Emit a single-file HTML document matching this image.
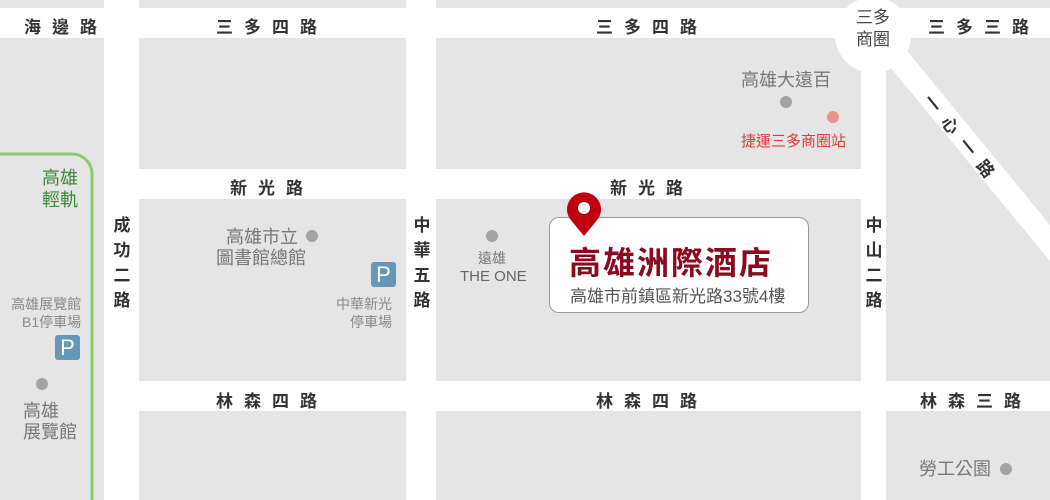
<!DOCTYPE html>
<html><head><meta charset="utf-8"><style>
*{margin:0;padding:0}
body{width:1050px;height:500px;background:#fff;position:relative;overflow:hidden;font-family:"Liberation Sans","Noto Sans CJK TC",sans-serif}
.b{position:absolute;background:#e5e5e5}
.t{position:absolute;white-space:nowrap}
.r{font-weight:bold;color:#333;font-size:17px;letter-spacing:11px}
.v{font-weight:bold;color:#333;font-size:17px;line-height:25px;width:20px;text-align:center}
.g{color:#777;font-size:18px;line-height:21px}
.d{position:absolute;width:12px;height:12px;border-radius:50%;background:#a3a3a3}
.p{position:absolute;width:25px;height:25px;background:#6598b8;border-radius:3px;color:#fff;font-size:22px;line-height:25px;text-align:center}
</style></head><body>
<div class="b" style="left:0;top:0;width:104px;height:8px"></div>
<div class="b" style="left:139px;top:0;width:267px;height:8px"></div>
<div class="b" style="left:436px;top:0;width:425px;height:8px"></div>
<div class="b" style="left:886px;top:0;width:164px;height:8px"></div>
<div class="b" style="left:0;top:38px;width:104px;height:462px"></div>
<div class="b" style="left:139px;top:38px;width:267px;height:131px"></div>
<div class="b" style="left:436px;top:38px;width:425px;height:131px"></div>
<div class="b" style="left:886px;top:38px;width:164px;height:343px"></div>
<div class="b" style="left:139px;top:199px;width:267px;height:182px"></div>
<div class="b" style="left:436px;top:199px;width:425px;height:182px"></div>
<div class="b" style="left:139px;top:411px;width:267px;height:89px"></div>
<div class="b" style="left:436px;top:411px;width:425px;height:89px"></div>
<div class="b" style="left:886px;top:411px;width:164px;height:89px"></div>
<svg width="1050" height="500" style="position:absolute;left:0;top:0">
<polygon points="868,40 898,40 1050,225 1050,261" fill="#fff"/>
<circle cx="873" cy="35" r="38" fill="#fff"/>
<path d="M0,154 H72 A20,20 0 0 1 92,174 V500" fill="none" stroke="#8bcc6a" stroke-width="3"/>
</svg>
<div class="t r" style="left:24px;top:13px">海邊路</div>
<div class="t r" style="left:216px;top:13px">三多四路</div>
<div class="t r" style="left:596px;top:13px">三多四路</div>
<div class="t r" style="left:928px;top:13px">三多三路</div>
<div class="t r" style="left:230px;top:174px">新光路</div>
<div class="t r" style="left:610px;top:174px">新光路</div>
<div class="t r" style="left:216px;top:387px">林森四路</div>
<div class="t r" style="left:596px;top:387px">林森四路</div>
<div class="t r" style="left:920px;top:387px">林森三路</div>
<div class="t v" style="left:112px;top:213px">成<br>功<br>二<br>路</div>
<div class="t v" style="left:412px;top:213px">中<br>華<br>五<br>路</div>
<div class="t v" style="left:864px;top:213px">中<br>山<br>二<br>路</div>
<div class="t" style="left:856px;top:7px;color:#444;font-size:17px;line-height:22px;text-align:center">三多<br>商圈</div>
<div class="t" style="left:938px;top:88px;color:#333;font-size:17px;font-weight:bold;transform:rotate(51deg);transform-origin:0 0;letter-spacing:11px">一心一路</div>
<div class="t" style="left:42px;top:167px;color:#3a8a3a;font-size:18px;line-height:22px">高雄<br>輕軌</div>
<div class="t g" style="left:741px;top:70px">高雄大遠百</div>
<div class="d" style="left:780px;top:96px"></div>
<div class="d" style="left:827px;top:111px;background:#f08e90"></div>
<div class="t" style="left:741px;top:130px;color:#e2383d;font-size:15px">捷運三多商圈站</div>
<div class="t g" style="left:226px;top:227px">高雄市立</div>
<div class="t g" style="left:216px;top:248px">圖書館總館</div>
<div class="d" style="left:306px;top:230px"></div>
<div class="p" style="left:371px;top:262px">P</div>
<div class="t" style="left:336px;top:295px;color:#888;font-size:14px;line-height:18px;text-align:right">中華新光<br><span style="padding-left:14px">停車場</span></div>
<div class="t" style="left:10px;top:295px;color:#888;font-size:14px;line-height:18px;text-align:right">高雄展覽館<br><span style="padding-left:12px">B1停車場</span></div>
<div class="p" style="left:55px;top:335px">P</div>
<div class="d" style="left:36px;top:378px"></div>
<div class="t g" style="left:23px;top:401px;line-height:21px">高雄<br>展覽館</div>
<div class="d" style="left:486px;top:230px"></div>
<div class="t" style="left:478px;top:248px;color:#777;font-size:14px">遠雄</div>
<div class="t" style="left:460px;top:268px;color:#666;font-size:15px">THE ONE</div>
<div style="position:absolute;left:549px;top:217px;width:258px;height:94px;border:1px solid #999;border-radius:10px;background:#fff"></div>
<div class="t" style="left:569px;top:238px;color:#8a0a20;font-size:32px;font-weight:bold;letter-spacing:2px">高雄洲際酒店</div>
<div class="t" style="left:570px;top:282px;color:#555;font-size:17px">高雄市前鎮區新光路33號4樓</div>
<div class="t g" style="left:919px;top:459px">勞工公園</div>
<div class="d" style="left:1000px;top:463px"></div>
<svg width="40" height="50" style="position:absolute;left:564px;top:190px">
<path d="M20,46 L6,29 A17,17 0 1 1 34,29 Z" fill="#c00010"/>
<circle cx="20" cy="18" r="6" fill="#fff"/>
</svg>
</body></html>
